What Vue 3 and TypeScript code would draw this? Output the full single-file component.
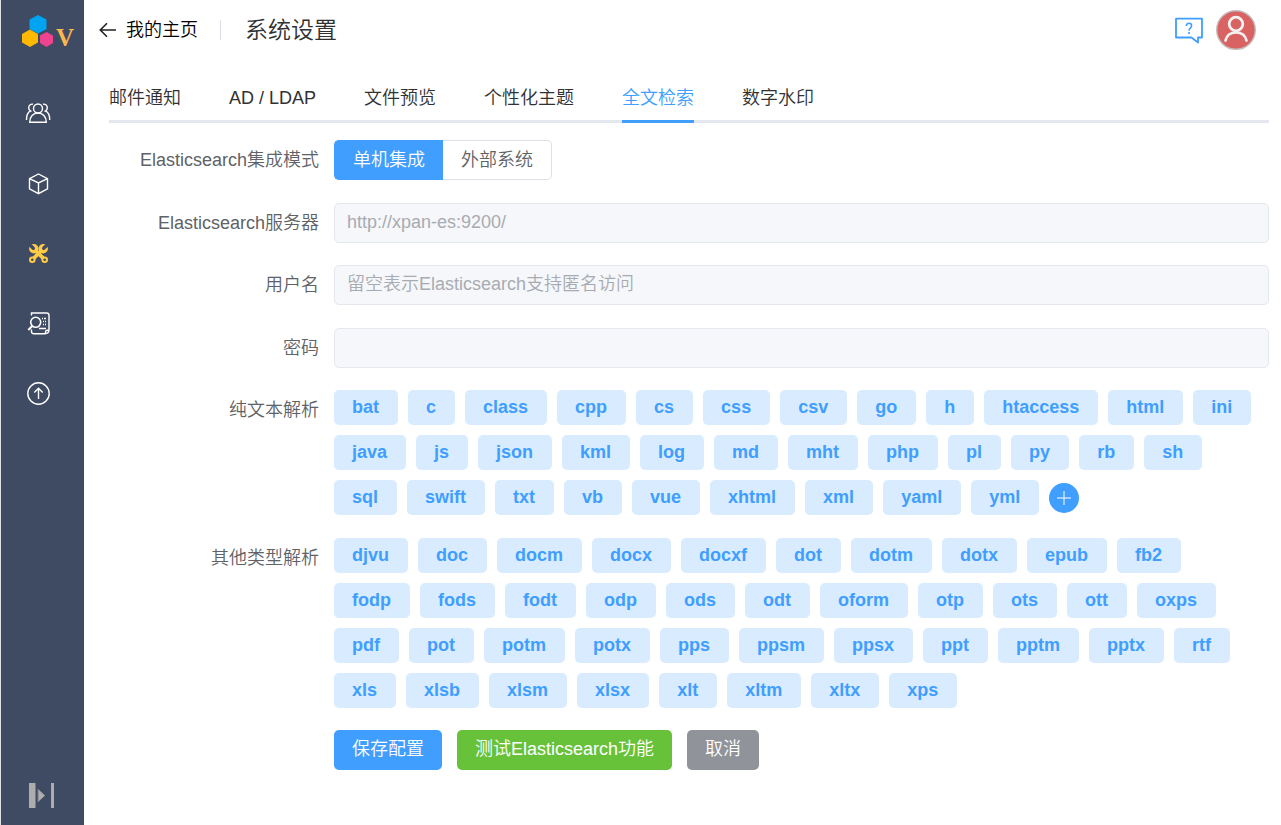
<script setup lang="ts">
import { ref } from 'vue'

const tabs: string[] = ['邮件通知', 'AD / LDAP', '文件预览', '个性化主题', '全文检索', '数字水印']
const activeTab = ref<string>('全文检索')

const modes = [
  { value: 'standalone', label: '单机集成' },
  { value: 'external', label: '外部系统' },
]
const mode = ref<string>('standalone')

const textTypes: string[] = [
  'bat', 'c', 'class', 'cpp', 'cs', 'css', 'csv', 'go', 'h', 'htaccess', 'html', 'ini',
  'java', 'js', 'json', 'kml', 'log', 'md', 'mht', 'php', 'pl', 'py', 'rb', 'sh',
  'sql', 'swift', 'txt', 'vb', 'vue', 'xhtml', 'xml', 'yaml', 'yml',
]
const otherTypes: string[] = [
  'djvu', 'doc', 'docm', 'docx', 'docxf', 'dot', 'dotm', 'dotx', 'epub', 'fb2',
  'fodp', 'fods', 'fodt', 'odp', 'ods', 'odt', 'oform', 'otp', 'ots', 'ott', 'oxps',
  'pdf', 'pot', 'potm', 'potx', 'pps', 'ppsm', 'ppsx', 'ppt', 'pptm', 'pptx', 'rtf',
  'xls', 'xlsb', 'xlsm', 'xlsx', 'xlt', 'xltm', 'xltx', 'xps',
]
</script>

<template>
  <div class="layout">
    <aside class="sidebar">
      <a class="logo" href="#" aria-label="首页">
        <svg width="34" height="36" viewBox="0 0 34 36" aria-hidden="true">
          <polygon points="17,1 25.500,5.500 25.500,15 17,19.500 8.500,15 8.500,5.500" fill="#00a4f0" />
          <polygon points="9,15.500 17,20 17,28.500 9,33 1,28.500 1,20" fill="#ffb900" />
          <polygon points="25.500,18 32,21.500 32,29 25.500,33 19,29 19,21.500" fill="#ee4490" />
        </svg>
        <span class="logo-letter">V</span>
      </a>
      <nav class="nav">
        <a href="#" aria-label="用户">
          <svg width="26" height="26" viewBox="0 0 26 26" class="line">
            <circle cx="13" cy="8.500" r="4.500" />
            <path d="M4.700 22.300c0-5.500 3.500-9.300 8.300-9.300s8.300 3.800 8.300 9.300z" />
            <path d="M8 4.200c-2.600-.4-4.300 1.200-4.300 3.600 0 1.400.7 2.500 1.700 3.100C2.700 12.200 1.500 15 1.500 20M6.500 11.500l-1.100-.6M18 4.200c2.600-.4 4.300 1.200 4.300 3.600 0 1.400-.7 2.500-1.700 3.100C23.300 12.200 24.700 15 24.700 20M19.500 11.500l1.100-.6" />
          </svg>
        </a>
        <a href="#" aria-label="空间">
          <svg width="26" height="26" viewBox="0 0 26 26" class="line">
            <path d="M13.500 4l9 4.600v10.200l-9 4.900-9-4.900V8.600zM4.500 8.600l9 4.300 9-4.300M13.500 12.900v10.800" />
          </svg>
        </a>
        <a href="#" aria-label="系统设置" aria-current="page">
          <svg width="26" height="26" viewBox="0 0 26 26" class="tools">
            <path d="M9 9l10.500 10.500M18 9L7.500 19.500" stroke-width="3.800" />
            <circle cx="8.800" cy="8.800" r="4.700" class="head" />
            <circle cx="18.200" cy="8.800" r="4.700" class="head" />
            <path d="M3.500 3.500l4.800 4.800M23.500 3.500l-4.800 4.800" class="notch" />
            <circle cx="7.300" cy="19.700" r="2.300" stroke-width="2" class="hole" />
            <circle cx="19.700" cy="19.700" r="2.300" stroke-width="2" class="hole" />
          </svg>
        </a>
        <a href="#" aria-label="日志审计">
          <svg width="26" height="26" viewBox="0 0 26 26" class="line">
            <path d="M6.500 5.500V3h15.200c1.600 0 2.300.7 2.300 2.300v14.200c0 2.700-1.500 4.200-4.200 4.200H9c-1.700 0-2.500-.7-2.500-2.200v-2M20 23.500c.8-.8.300-2 1-2.700s2-.3 3-.9" />
            <circle cx="10.700" cy="12.300" r="5" stroke-width="1.600" />
            <path d="M7.200 16L3.300 20" stroke-width="2" />
            <path d="M17 8.500h1M19 8.500h2M18 11.500h1M20 11.500h1M18 14.500h1M20 14.500h1M14 18.500h7" />
          </svg>
        </a>
        <a href="#" aria-label="升级">
          <svg width="26" height="26" viewBox="0 0 26 26" class="line">
            <circle cx="13.500" cy="13.500" r="10.700" />
            <path d="M13.500 19V8.500M9.300 12.500l4.200-4.200 4.200 4.200" />
          </svg>
        </a>
      </nav>
      <button class="expand" type="button" aria-label="展开菜单">
        <svg width="25" height="25" viewBox="0 0 25 25" aria-hidden="true">
          <path d="M0 0h6v25H0zM22 0h3v25h-3zM9 6l7 6.500L9 19z" fill="#adadad" />
          <path d="M6.500 0v25M9 6v13" stroke="#777b86" />
        </svg>
      </button>
    </aside>

    <main class="main">
      <header class="header">
        <a class="back" href="#">
          <svg width="18" height="18" viewBox="0 0 18 18" aria-hidden="true">
            <path d="M17 9H1.500M8 2.300L1.300 9 8 15.700" />
          </svg>
          <span>我的主页</span>
        </a>
        <h1>系统设置</h1>
        <div class="actions">
          <button type="button" class="help" aria-label="帮助">
            <svg width="30" height="28" viewBox="0 0 30 28" aria-hidden="true">
              <path d="M2 2.600h26v18.900h-4v5l-6.500-5H2z" stroke-linejoin="round" />
              <path d="M12.300 10c.1-1.800 1.100-2.800 2.700-2.800s2.600 1 2.600 2.600c0 2.100-2.600 2.400-2.600 4.900M15 16v2" stroke-width="1.600" />
            </svg>
          </button>
          <button type="button" class="avatar" aria-label="个人中心">
            <svg width="40" height="40" viewBox="0 0 40 40" aria-hidden="true">
              <circle cx="20" cy="20" r="19.300" fill="#d96363" stroke="#c4bebe" stroke-width="1.400" />
              <g fill="none" stroke="#f6f1f1" stroke-width="2.800" stroke-linecap="round">
                <circle cx="20" cy="14" r="6.800" />
                <path d="M9.500 30.500C10.500 25.500 14.500 22.300 20 22.300s9.500 3.200 10.500 8.200" />
              </g>
            </svg>
          </button>
        </div>
      </header>

      <div class="tabs" role="tablist">
        <button
          v-for="tab in tabs"
          :key="tab"
          type="button"
          role="tab"
          :aria-selected="tab === activeTab"
          :class="['tab', { active: tab === activeTab }]"
          @click="activeTab = tab"
        >{{ tab }}</button>
      </div>

      <form class="form" @submit.prevent>
        <div class="item">
          <span id="mode-label" class="label">Elasticsearch集成模式</span>
          <div class="segmented" role="radiogroup" aria-labelledby="mode-label">
            <label v-for="m in modes" :key="m.value" :class="{ checked: mode === m.value }">
              <input v-model="mode" type="radio" name="mode" :value="m.value" />
              <span>{{ m.label }}</span>
            </label>
          </div>
        </div>
        <div class="item">
          <label class="label" for="server">Elasticsearch服务器</label>
          <input id="server" class="field" type="text" placeholder="http://xpan-es:9200/" disabled />
        </div>
        <div class="item">
          <label class="label" for="username">用户名</label>
          <input id="username" class="field" type="text" placeholder="留空表示Elasticsearch支持匿名访问" disabled />
        </div>
        <div class="item">
          <label class="label" for="password">密码</label>
          <input id="password" class="field" type="password" disabled />
        </div>
        <div class="item">
          <span id="text-types" class="label">纯文本解析</span>
          <ul class="tags" aria-labelledby="text-types">
            <li v-for="ext in textTypes" :key="ext" class="tag">{{ ext }}</li>
            <li class="add-cell">
              <button class="add" type="button" aria-label="添加">
                <svg width="16" height="16" viewBox="0 0 16 16" aria-hidden="true">
                  <path d="M8 1v14M1 8h14" stroke="#fff" fill="none" />
                </svg>
              </button>
            </li>
          </ul>
        </div>
        <div class="item">
          <span id="other-types" class="label">其他类型解析</span>
          <ul class="tags" aria-labelledby="other-types">
            <li v-for="ext in otherTypes" :key="ext" class="tag">{{ ext }}</li>
          </ul>
        </div>
        <div class="buttons">
          <button class="btn primary" type="submit">保存配置</button>
          <button class="btn success" type="button">测试Elasticsearch功能</button>
          <button class="btn info" type="button">取消</button>
        </div>
      </form>
    </main>
  </div>
</template>

<style>
body {
  margin: 0;
  background: #fff;
}
</style>

<style scoped>
.layout {
  display: flex;
  min-height: 100vh;
  box-sizing: border-box;
  border-left: 1px solid #e0e0e0;
  font-family: "Liberation Sans", "Noto Sans CJK SC", sans-serif;
  font-size: 18px;
  font-weight: 350;
  line-height: 24px;
  color: #303133;
}
button,
input {
  font: inherit;
  color: inherit;
}
button {
  border: 0;
  padding: 0;
  background: none;
  cursor: pointer;
}
svg {
  display: block;
}
.sidebar {
  display: flex;
  flex-direction: column;
  flex: none;
  width: 83px;
  background: #3f4a63;
}
.logo {
  display: flex;
  align-items: flex-end;
  height: 50px;
  padding-left: 20px;
  box-sizing: border-box;
  text-decoration: none;
}
.logo svg {
  flex: none;
}
.logo-letter {
  margin-left: 1px;
  font-family: "Liberation Serif", serif;
  font-size: 25px;
  font-weight: 700;
  line-height: 24px;
  color: #fcb64e;
}
.nav {
  display: flex;
  flex-direction: column;
  gap: 44px;
  padding: 50px 0 0 24px;
}
.nav a {
  width: 26px;
}
.line {
  fill: none;
  stroke: #fff;
  stroke-width: 1.4;
}
.tools {
  fill: none;
  stroke: #ffcb45;
}
.tools .head {
  fill: #ffcb45;
  stroke: none;
}
.tools .notch {
  stroke: #3f4a63;
  stroke-width: 3.4;
  stroke-linecap: round;
}
.tools .hole {
  fill: #3f4a63;
}
.expand {
  align-self: flex-start;
  margin: auto 0 17px 28px;
}
.main {
  flex: 1;
  min-width: 0;
  padding: 0 12px 55px 0;
}
.header {
  display: flex;
  align-items: center;
  height: 60px;
  padding: 0 14px 0 15px;
}
.back {
  display: flex;
  align-items: center;
  gap: 9px;
  padding-right: 24px;
  color: #000;
  text-decoration: none;
}
.back svg {
  fill: none;
  stroke: #222;
  stroke-width: 1.6;
}
.back::after {
  content: "";
  width: 1px;
  height: 20px;
  margin-left: 13px;
  background: #dcdfe6;
}
h1 {
  margin: 0;
  font-size: 23px;
  font-weight: 350;
  line-height: 30px;
}
.actions {
  display: flex;
  align-items: center;
  gap: 12px;
  margin-left: auto;
  margin-right: -1px;
}
.help svg {
  fill: none;
  stroke: #409eff;
  stroke-width: 1.8;
}
.tabs {
  display: flex;
  gap: 48px;
  margin: 15px 0 17px 25px;
  box-shadow: inset 0 -3px #e4e7ed;
}
.tab {
  height: 48px;
  padding-bottom: 3px;
}
.tab.active {
  color: #409eff;
  box-shadow: inset 0 -3px #409eff;
}
.item {
  display: flex;
  align-items: flex-start;
  gap: 15px;
  margin-bottom: 22px;
}
.item:nth-child(odd) {
  margin-bottom: 23px;
}
.label {
  flex: none;
  width: 235px;
  line-height: 40px;
  text-align: right;
  color: #606266;
}
.segmented {
  display: flex;
}
.segmented label {
  padding: 0 18px;
  border: 1px solid #dcdfe6;
  line-height: 38px;
  color: #606266;
  cursor: pointer;
}
.segmented label:first-child {
  border-right: 0;
  border-radius: 5px 0 0 5px;
}
.segmented label:last-child {
  border-left: 0;
  border-radius: 0 5px 5px 0;
}
.segmented label.checked {
  border-color: #409eff;
  background: #409eff;
  color: #fff;
}
.segmented input {
  position: absolute;
  opacity: 0;
  margin: 0;
}
.field {
  flex: 1;
  min-width: 0;
  height: 40px;
  box-sizing: border-box;
  padding: 0 12px 1px;
  border: 1px solid #e4e7ed;
  border-radius: 5px;
  background: #f5f7fa;
}
.field::placeholder {
  color: #a8abb2;
  opacity: 1;
}
.tags {
  display: flex;
  flex: 1;
  flex-wrap: wrap;
  row-gap: 10px;
  min-width: 0;
  margin: 0;
  padding: 0;
  list-style: none;
}
.tag {
  height: 35px;
  margin-right: 10px;
  padding: 0 19px 0 18px;
  border-radius: 5px;
  background: #d9ecff;
  color: #409eff;
  font-weight: 700;
  line-height: 34px;
}
.add-cell {
  display: flex;
  align-items: center;
}
.add {
  display: grid;
  place-items: center;
  width: 30px;
  height: 30px;
  border-radius: 50%;
  background: #409eff;
}
.buttons {
  display: flex;
  gap: 15px;
  margin-left: 250px;
}
.btn {
  height: 40px;
  padding: 0 18px 2px;
  border-radius: 5px;
  color: #fff;
}
.primary {
  background: #409eff;
}
.success {
  background: #67c23a;
}
.info {
  background: #909399;
}
</style>
